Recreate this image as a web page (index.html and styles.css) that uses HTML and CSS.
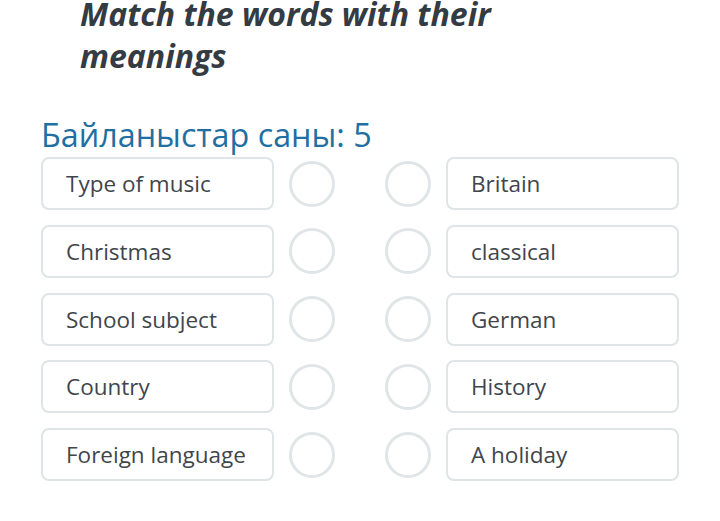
FILE: index.html
```html
<!DOCTYPE html>
<html lang="en">
<head>
    <meta charset="UTF-8">
    <meta name="viewport" content="width=device-width, initial-scale=1.0">
    <title>Match the words</title>
    <link rel="stylesheet" href="styles.css">
</head>
<body>
    <div class="task">
        <h1 class="title">Match the words with their meanings</h1>

        <p class="count">Байланыстар саны: 5</p>

        <div class="pairs">
            <div class="item">Type of music</div>
            <span class="dot dot-left"></span>
            <span class="dot dot-right"></span>
            <div class="item">Britain</div>

            <div class="item">Christmas</div>
            <span class="dot dot-left"></span>
            <span class="dot dot-right"></span>
            <div class="item">classical</div>

            <div class="item">School subject</div>
            <span class="dot dot-left"></span>
            <span class="dot dot-right"></span>
            <div class="item">German</div>

            <div class="item">Country</div>
            <span class="dot dot-left"></span>
            <span class="dot dot-right"></span>
            <div class="item">History</div>

            <div class="item">Foreign language</div>
            <span class="dot dot-left"></span>
            <span class="dot dot-right"></span>
            <div class="item">A holiday</div>
        </div>
    </div>
</body>
</html>
```

FILE: styles.css
```css
body {
    margin: 0;
    background-color: #ffffff;
    font-family: "Open Sans", Arial, sans-serif;
    color: #3d4449;
}

.task {
    padding-left: 41px;
    width: 638px;
}

.title {
    margin: -7px 0 0 39px;
    width: 470px;
    font-size: 32px;
    line-height: 42px;
    font-weight: 700;
    font-style: italic;
    color: #343b42;
}

.count {
    margin: 37px 0 0;
    font-size: 32.3px;
    line-height: 40px;
    font-weight: 400;
    color: #1f6fa3;
}

.pairs {
    display: grid;
    grid-template-columns: 233px 1fr 1fr 233px;
    align-items: center;
    row-gap: 14.75px;
    margin-top: 3px;
}

.item {
    box-sizing: border-box;
    height: 53px;
    padding: 0 23px;
    display: flex;
    align-items: center;
    font-size: 22.5px;
    color: #3f464b;
    background-color: #fff;
    border: 2px solid #dfe4e7;
    border-radius: 8px;
}

.dot {
    box-sizing: border-box;
    width: 46px;
    height: 46px;
    border: 3px solid #e0e5e8;
    border-radius: 50%;
}

.dot-left {
    justify-self: start;
    margin-left: 15px;
}

.dot-right {
    justify-self: end;
    margin-right: 15px;
}
```
